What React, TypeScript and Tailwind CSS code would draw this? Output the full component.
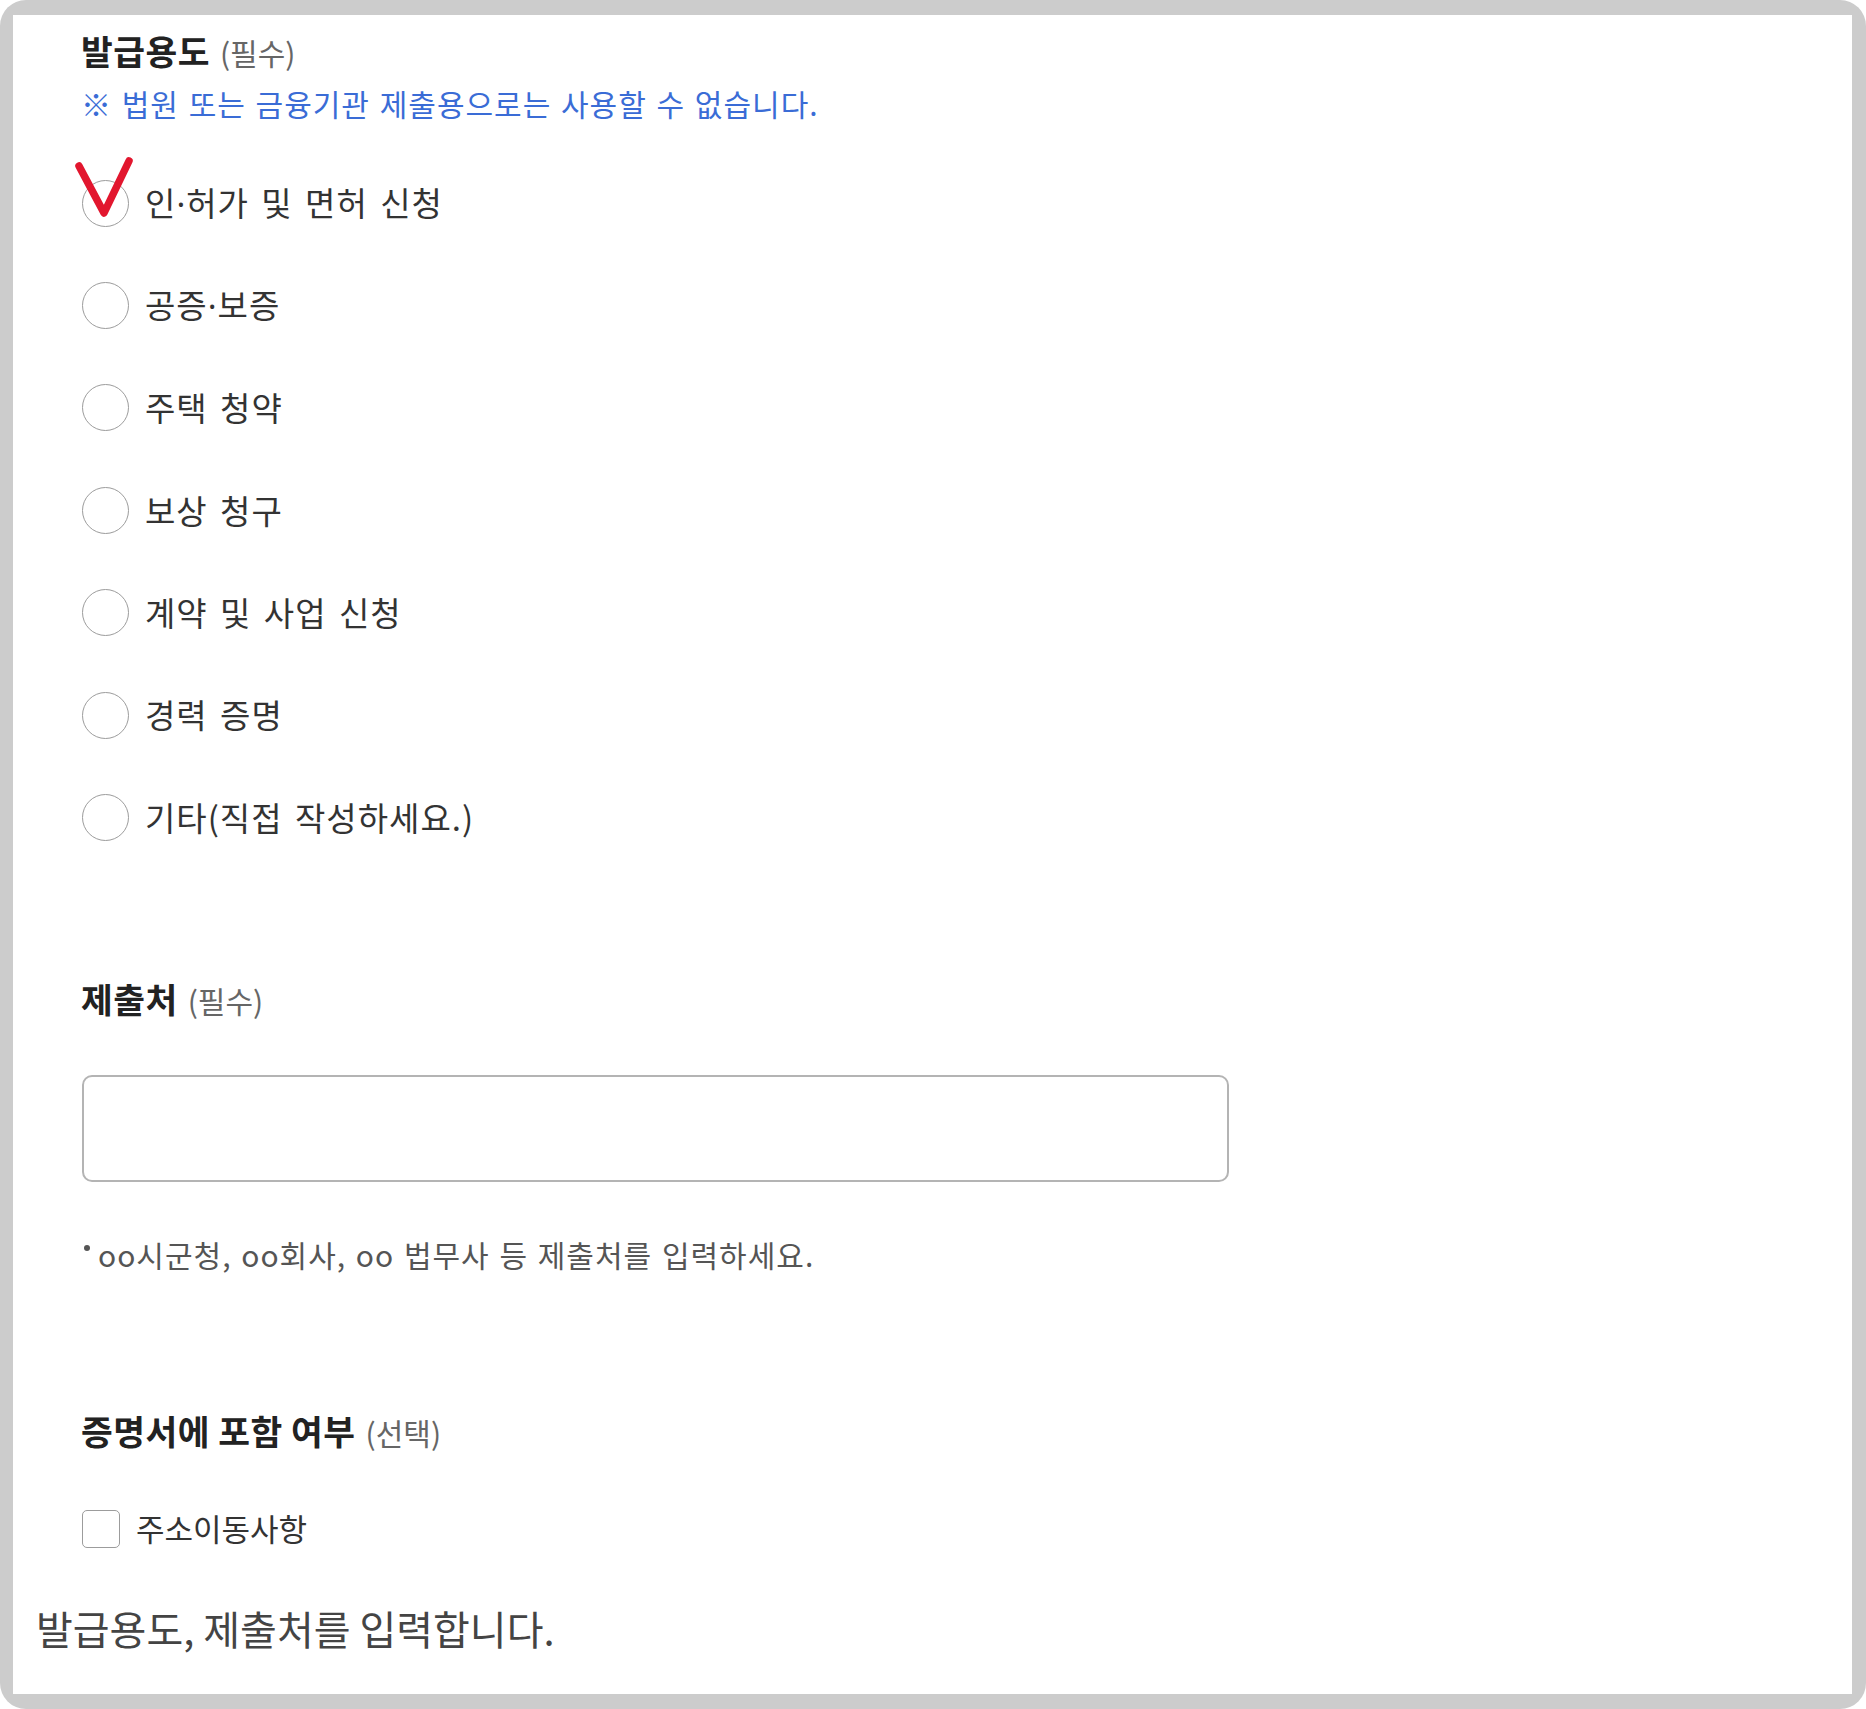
const font = { fontFamily: '"Noto Sans CJK KR", "Noto Sans", sans-serif' };

const purposes = [
  '인·허가 및 면허 신청',
  '공증·보증',
  '주택 청약',
  '보상 청구',
  '계약 및 사업 신청',
  '경력 증명',
  '기타(직접 작성하세요.)',
];

// the CJK font draws "·" full width; the reference has a narrow dot
function withDot(text: string) {
  const parts = text.split('·');
  return parts.map((part, i) => (
    <span key={i}>
      {i > 0 && <span className="font-['Noto_Sans']">·</span>}
      {part}
    </span>
  ));
}

function SectionTitle({ label, note }: { label: string; note: string }) {
  return (
    <div className="flex items-baseline h-[40px] leading-[40px]">
      <span className="text-[34.5px] font-bold text-[#222] tracking-[0.5px]">{label}</span>
      <span className="ml-[10px] text-[30px] text-[#666]">{note}</span>
    </div>
  );
}

function Radio({ label, marked }: { label: string; marked?: boolean }) {
  return (
    <div className="flex items-center h-[102.4px]">
      <div className="relative w-[47px] h-[47px] ml-[1px] shrink-0 rounded-full border-[1.5px] border-[#9c9c9c] bg-white">
        {marked && (
          <svg
            className="absolute left-[-10px] top-[-26px]"
            width="64"
            height="66"
            viewBox="0 0 64 66"
            fill="none"
          >
            <path
              d="M6 11 L31 58 L56 6"
              stroke="#e2162e"
              strokeWidth="7.5"
              strokeLinecap="round"
              strokeLinejoin="round"
            />
          </svg>
        )}
      </div>
      <span className="ml-[16px] text-[33px] text-[#333] tracking-[1px] [word-spacing:4px]">
        {withDot(label)}
      </span>
    </div>
  );
}

export default function App() {
  return (
    <div
      className="w-[1866px] h-[1709px] bg-[#cccccc] rounded-[26px] pt-[15px] pl-[13px] pr-[14px] pb-[15px]"
      style={font}
    >
      <div className="h-full bg-white flex flex-col">
        <div className="pl-[68px] pt-[15px] flex flex-col">
          {/* 발급용도 */}
          <SectionTitle label="발급용도" note="(필수)" />
          <p className="mt-[15px] h-[36px] leading-[36px] text-[30px] text-[#3a6cd6] tracking-[1px] [word-spacing:2px]">
            ※ 법원 또는 금융기관 제출용으로는 사용할 수 없습니다.
          </p>

          <div className="mt-[31px] flex flex-col">
            {purposes.map((p, i) => (
              <Radio key={p} label={p} marked={i === 0} />
            ))}
          </div>

          {/* 제출처 */}
          <div className="mt-[109px]">
            <SectionTitle label="제출처" note="(필수)" />
          </div>
          <div className="mt-[57px] w-[1147px] h-[107px] ml-[1px] rounded-[10px] border-2 border-[#b4b4b4] bg-white" />
          <p className="mt-[54px] h-[36px] leading-[36px] text-[30px] text-[#555] tracking-[1px] [word-spacing:2px] flex items-center">
            <span className="inline-block w-[6px] h-[6px] rounded-full bg-[#555] ml-[3px] mr-[8px] -translate-y-[6px]" />
            <span>oo시군청, oo회사, oo 법무사 등 제출처를 입력하세요.</span>
          </p>

          {/* 증명서에 포함 여부 */}
          <div className="mt-[138px]">
            <SectionTitle label="증명서에 포함 여부" note="(선택)" />
          </div>
          <div className="mt-[59px] h-[40px] flex items-center">
            <div className="w-[38px] h-[38px] ml-[1px] rounded-[5px] border-[1.5px] border-[#9c9c9c] bg-white" />
            <span className="ml-[16px] text-[31px] text-[#333]">주소이동사항</span>
          </div>
        </div>

        <p className="mt-[55px] pl-[23px] h-[48px] leading-[48px] text-[40px] text-[#444]">
          발급용도, 제출처를 입력합니다.
        </p>
      </div>
    </div>
  );
}
